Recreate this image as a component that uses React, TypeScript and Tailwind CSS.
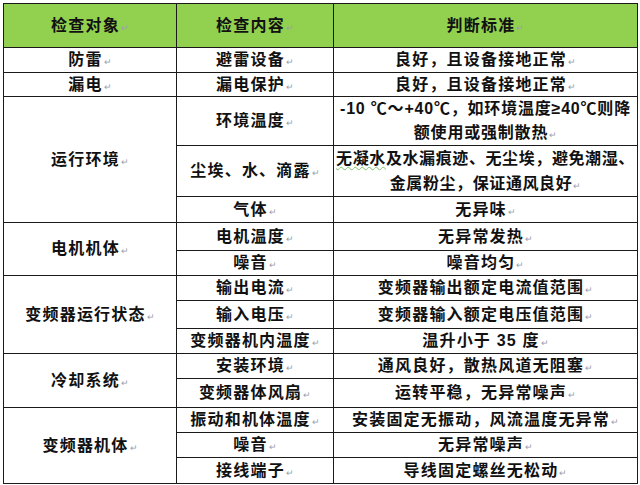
import React from "react";

type Row = {
  group?: { label: string; span: number };
  item: string;
  rule: React.ReactNode;
  h: number;
};

const Mark = () => (
  <span className="ml-[1px] align-baseline text-[9px] leading-none font-normal tracking-normal text-gray-400">↵</span>
);

const ROWS: Row[] = [
  { group: { label: "防雷", span: 1 }, item: "避雷设备", rule: "良好，且设备接地正常", h: 25 },
  { group: { label: "漏电", span: 1 }, item: "漏电保护", rule: "良好，且设备接地正常", h: 24 },
  {
    group: { label: "运行环境", span: 3 },
    item: "环境温度",
    rule: (
      <span className="block leading-[24px] tracking-[0.8px]">
        -10 ℃～+40℃，如环境温度≥40℃则降
        <br />
        额使用或强制散热
        <Mark />
      </span>
    ),
    h: 49,
  },
  {
    item: "尘埃、水、滴露",
    rule: (
      <span className="block leading-[25px] tracking-[0.6px]">
        <span className="underline decoration-wavy decoration-[#7fbf6a] decoration-1 underline-offset-2">无凝水</span>
        及水漏痕迹、无尘埃，避免潮湿、
        <br />
        金属粉尘，保证通风良好
        <Mark />
      </span>
    ),
    h: 50,
  },
  { item: "气体", rule: "无异味", h: 26 },
  { group: { label: "电机机体", span: 2 }, item: "电机温度", rule: "无异常发热", h: 28 },
  { item: "噪音", rule: "噪音均匀", h: 25 },
  { group: { label: "变频器运行状态", span: 3 }, item: "输出电流", rule: "变频器输出额定电流值范围", h: 25 },
  { item: "输入电压", rule: "变频器输入额定电压值范围", h: 28 },
  { item: "变频器机内温度", rule: "温升小于 35 度", h: 25 },
  { group: { label: "冷却系统", span: 2 }, item: "安装环境", rule: "通风良好，散热风道无阻塞", h: 25 },
  { item: "变频器体风扇", rule: "运转平稳，无异常噪声", h: 29 },
  { group: { label: "变频器机体", span: 3 }, item: "振动和机体温度", rule: "安装固定无振动，风流温度无异常", h: 25 },
  { item: "噪音", rule: "无异常噪声", h: 25 },
  { item: "接线端子", rule: "导线固定螺丝无松动", h: 26 },
];

const cell = "border border-[#1a1a1a] p-0 text-center align-middle whitespace-nowrap";

export default function App() {
  return (
    <div className="h-[485px] w-[640px] overflow-hidden bg-white pl-[3px] pt-[3px]">
      <table
        className="w-[634px] table-fixed border-collapse text-[16px] font-bold leading-[18px] tracking-[1.2px] text-[#111]"
        style={{ fontFamily: '"Liberation Sans", "Noto Sans CJK SC", sans-serif' }}
      >
        <colgroup>
          <col className="w-[173px]" />
          <col className="w-[157px]" />
          <col className="w-[304px]" />
        </colgroup>
        <thead>
          <tr className="h-[44px] bg-[#92d050]">
            <th className={cell}>
              检查对象<Mark />
            </th>
            <th className={cell}>
              检查内容<Mark />
            </th>
            <th className={cell}>
              判断标准<Mark />
            </th>
          </tr>
        </thead>
        <tbody>
          {ROWS.map((r, i) => (
            <tr key={i} style={{ height: r.h }}>
              {r.group && (
                <td className={cell} rowSpan={r.group.span}>
                  {r.group.label}
                  <Mark />
                </td>
              )}
              <td className={cell}>
                {r.item}
                <Mark />
              </td>
              <td className={cell}>
                {r.rule}
                {typeof r.rule === "string" && <Mark />}
              </td>
            </tr>
          ))}
        </tbody>
      </table>
    </div>
  );
}
